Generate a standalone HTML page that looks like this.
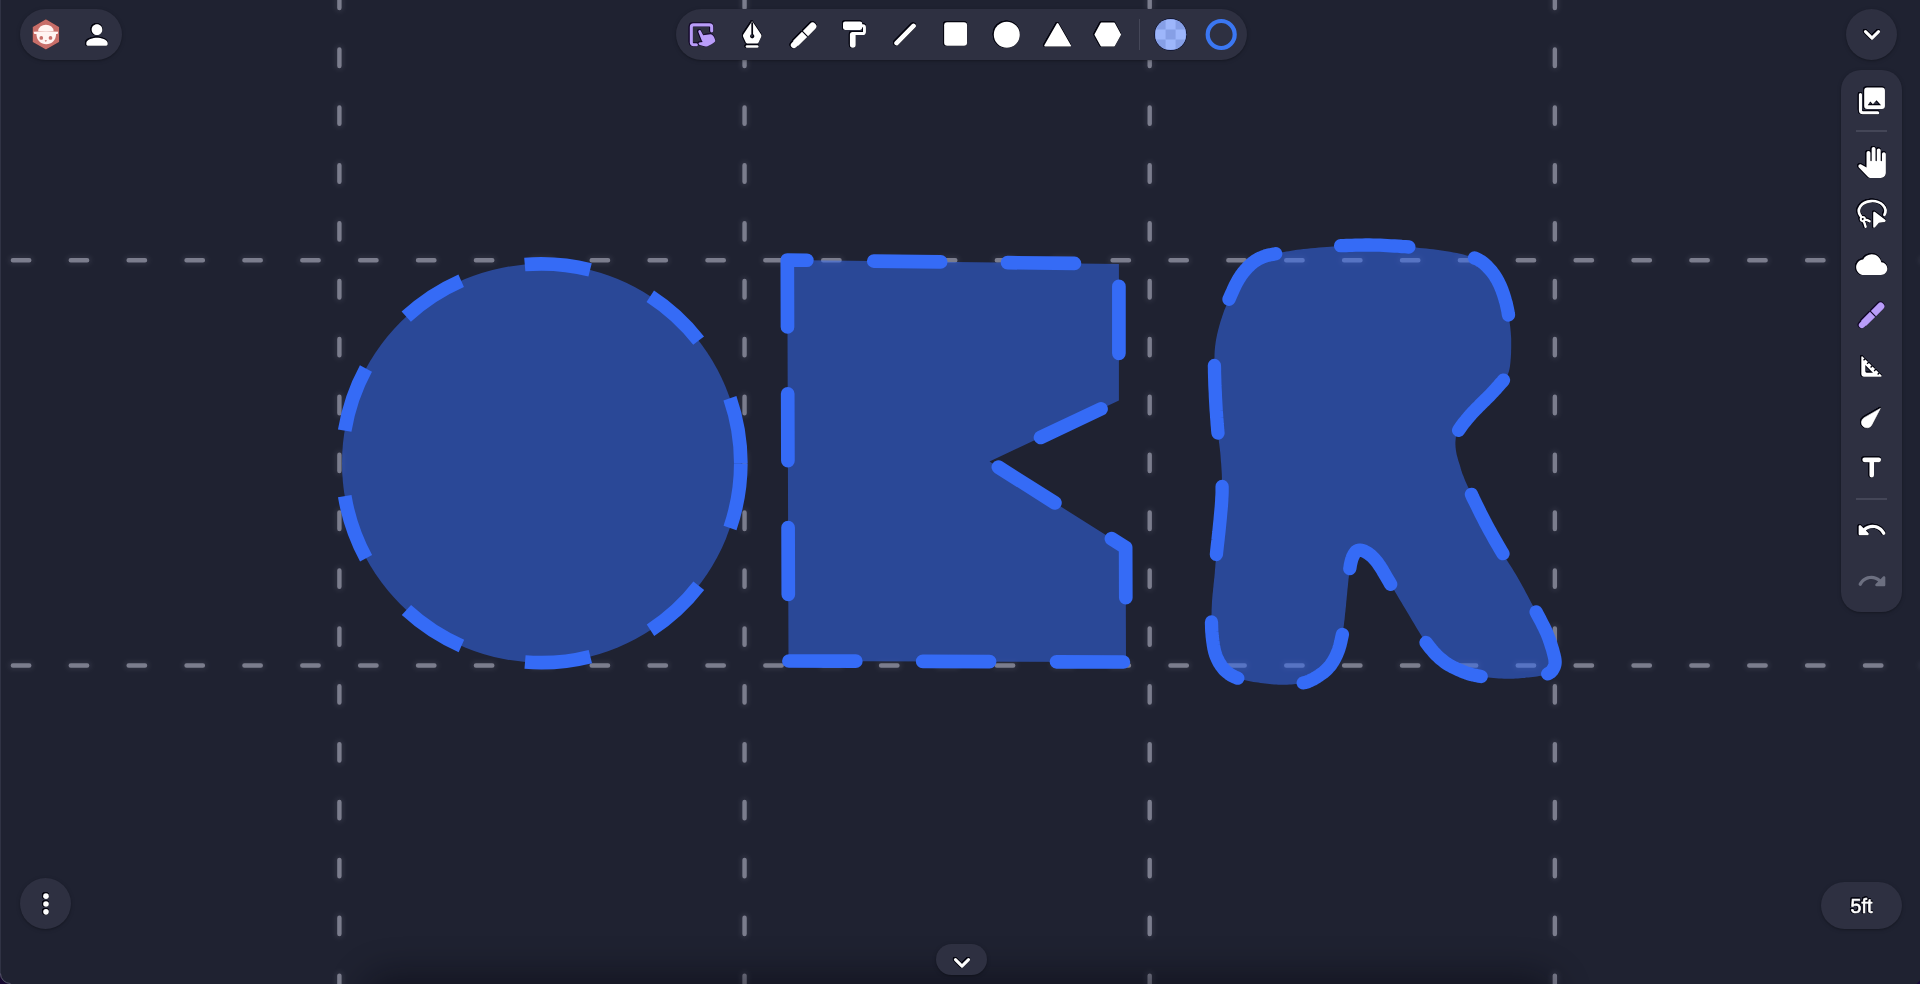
<!DOCTYPE html>
<html lang="en">
<head>
<meta charset="utf-8">
<title>Drawing canvas</title>
<style>
html,body{margin:0;padding:0}
body{width:1920px;height:984px;overflow:hidden;position:relative;background:#1f2231;font-family:"Liberation Sans",sans-serif}
.cv{position:absolute;left:0;top:0;display:block}
.pn{position:absolute;background:#2e3041;box-shadow:0 1px 2px rgba(0,0,0,.22),0 1px 5px rgba(0,0,0,.10)}
.ic{position:absolute;display:block;overflow:visible}
.hl2{filter:drop-shadow(.6px 0 .3px rgba(18,6,40,.75)) drop-shadow(-.6px 0 .3px rgba(18,6,40,.75)) drop-shadow(0 .6px .3px rgba(18,6,40,.75)) drop-shadow(0 -.6px .3px rgba(18,6,40,.75))}
.hl{filter:drop-shadow(.8px 0 .25px #04040f) drop-shadow(-.8px 0 .25px #04040f) drop-shadow(0 .8px .25px #04040f) drop-shadow(0 -.8px .25px #04040f)}
.ft{display:flex;align-items:center;justify-content:center;color:#fff;font-size:19.6px;letter-spacing:0}
.ft span{display:block;position:relative;top:.6px;-webkit-text-stroke:.6px #fff}
.edge{position:absolute;left:0;top:0;width:1px;height:984px;background:#303344}
.corner{position:absolute;left:0;top:0;display:block}
</style>
</head>
<body>
<svg class="cv" width="1920" height="984" viewBox="0 0 1920 984">
<defs><filter id="gb" x="-5%" y="-5%" width="110%" height="110%"><feGaussianBlur stdDeviation="2.2"/></filter></defs>
<g fill="none" stroke="#9a9cb0" stroke-opacity=".11" stroke-width="9" stroke-linecap="round" stroke-dasharray="16.40 41.479" filter="url(#gb)"><line x1="339.4" y1="-66.22" x2="339.4" y2="1000"/><line x1="744.55" y1="-66.22" x2="744.55" y2="1000"/><line x1="1149.7" y1="-66.22" x2="1149.7" y2="1000"/><line x1="1554.85" y1="-66.22" x2="1554.85" y2="1000"/><line x1="-102.88" y1="260.3" x2="1940" y2="260.3"/><line x1="-102.88" y1="665.5" x2="1940" y2="665.5"/></g>
<g fill="none" stroke="#7b7d8d" stroke-width="4.4" stroke-linecap="round" stroke-dasharray="16.40 41.479"><line x1="339.4" y1="-66.22" x2="339.4" y2="1000"/><line x1="744.55" y1="-66.22" x2="744.55" y2="1000"/><line x1="1149.7" y1="-66.22" x2="1149.7" y2="1000"/><line x1="1554.85" y1="-66.22" x2="1554.85" y2="1000"/><line x1="-102.88" y1="260.3" x2="1940" y2="260.3"/><line x1="-102.88" y1="665.5" x2="1940" y2="665.5"/></g>
<circle cx="541.4" cy="463.25" r="199.4" fill="#356bf6" fill-opacity="0.52"/><circle cx="541.4" cy="463.25" r="199.4" fill="none" stroke="#356bf6" stroke-width="13.7" stroke-dasharray="65.90 65.90"/>
<path d="M787.3 260.0 L788.5 661.0 L1126.0 662.0 L1125.65 547.6 L989.5 461.5 L1118.9 400.5 L1118.9 264.0Z" fill="#356bf6" fill-opacity="0.52"/><path d="M787.3 260.0 L788.5 661.0 L1126.0 662.0 L1125.65 547.6 L989.5 461.5 L1118.9 400.5 L1118.9 264.0Z" fill="none" stroke="#356bf6" stroke-width="13.7" stroke-linecap="round" stroke-linejoin="round" stroke-dasharray="66.9 66.9"/>
<path d="M1218.0 433.1 L1217.7 430.3 L1217.5 427.3 L1217.2 424.2 L1217.0 420.9 L1216.7 417.5 L1216.5 414.0 L1216.2 410.5 L1216.0 407.0 L1215.8 403.5 L1215.6 400.0 L1215.4 396.4 L1215.3 392.9 L1215.1 389.3 L1214.9 385.6 L1214.8 382.0 L1214.7 378.5 L1214.6 375.0 L1214.5 371.7 L1214.5 368.5 L1214.4 365.5 L1214.4 362.7 L1214.4 360.1 L1214.5 357.6 L1214.5 355.3 L1214.6 353.0 L1214.7 350.8 L1214.9 348.6 L1215.1 346.4 L1215.4 344.2 L1215.7 341.9 L1216.1 339.5 L1216.6 337.1 L1217.1 334.6 L1217.7 332.1 L1218.3 329.6 L1219.0 327.1 L1219.6 324.7 L1220.3 322.3 L1221.0 320.1 L1221.7 317.9 L1222.4 315.8 L1223.1 313.8 L1223.7 311.9 L1224.4 310.1 L1225.1 308.4 L1225.9 306.6 L1226.6 304.8 L1227.4 303.0 L1228.2 301.2 L1229.0 299.3 L1229.9 297.3 L1230.8 295.2 L1231.7 293.1 L1232.7 291.0 L1233.6 288.9 L1234.6 286.7 L1235.6 284.6 L1236.7 282.6 L1237.8 280.7 L1238.8 278.8 L1240.0 277.1 L1241.1 275.3 L1242.3 273.7 L1243.5 272.1 L1244.8 270.6 L1246.0 269.2 L1247.3 267.8 L1248.5 266.5 L1249.8 265.3 L1251.0 264.1 L1252.2 263.1 L1253.4 262.1 L1254.7 261.2 L1255.9 260.4 L1257.1 259.7 L1258.3 259.0 L1259.5 258.4 L1260.8 257.8 L1262.0 257.3 L1263.1 256.8 L1264.3 256.3 L1265.4 256.0 L1266.5 255.6 L1267.5 255.3 L1268.6 255.1 L1269.8 254.9 L1271.0 254.6 L1272.4 254.4 L1274.0 254.1 L1275.7 253.7 L1277.5 253.4 L1279.5 253.0 L1281.6 252.5 L1283.9 252.1 L1286.3 251.6 L1288.8 251.2 L1291.4 250.7 L1294.2 250.3 L1297.1 249.8 L1300.2 249.4 L1303.6 249.0 L1307.2 248.7 L1311.1 248.3 L1315.1 247.9 L1319.1 247.6 L1323.1 247.3 L1326.8 247.0 L1330.1 246.7 L1333.0 246.5 L1335.3 246.3 L1337.0 246.1 L1338.1 246.0 L1338.7 245.9 L1339.0 245.8 L1339.0 245.8 L1339.1 245.8 L1339.2 245.8 L1339.7 245.8 L1340.6 245.7 L1342.0 245.7 L1343.9 245.6 L1346.3 245.5 L1349.0 245.4 L1352.1 245.3 L1355.3 245.2 L1358.8 245.1 L1362.3 245.1 L1365.8 245.0 L1369.3 245.0 L1372.9 245.1 L1376.4 245.1 L1380.0 245.2 L1383.5 245.4 L1387.2 245.6 L1390.8 245.8 L1394.5 246.0 L1398.1 246.2 L1401.8 246.5 L1405.4 246.7 L1408.9 247.0 L1412.5 247.3 L1416.0 247.6 L1419.4 247.9 L1422.9 248.2 L1426.3 248.5 L1429.8 248.9 L1433.1 249.3 L1436.5 249.7 L1439.9 250.2 L1443.2 250.7 L1446.6 251.2 L1450.0 251.8 L1453.4 252.5 L1456.8 253.1 L1460.1 253.8 L1463.4 254.6 L1466.4 255.4 L1469.4 256.2 L1472.0 257.1 L1474.5 258.0 L1476.7 258.9 L1478.7 259.9 L1480.4 260.9 L1482.0 261.9 L1483.4 263.0 L1484.7 264.1 L1486.0 265.3 L1487.2 266.5 L1488.3 267.7 L1489.5 269.0 L1490.6 270.3 L1491.8 271.6 L1492.8 273.0 L1493.9 274.4 L1494.9 275.9 L1495.8 277.3 L1496.7 278.9 L1497.6 280.4 L1498.4 282.0 L1499.2 283.6 L1500.0 285.2 L1500.7 286.9 L1501.4 288.6 L1502.1 290.3 L1502.7 292.1 L1503.3 293.8 L1503.9 295.6 L1504.4 297.2 L1504.9 298.9 L1505.3 300.5 L1505.8 302.0 L1506.2 303.4 L1506.5 304.8 L1506.8 306.2 L1507.1 307.5 L1507.4 308.9 L1507.7 310.3 L1508.0 311.8 L1508.2 313.3 L1508.5 315.0 L1508.8 316.7 L1509.1 318.6 L1509.4 320.5 L1509.6 322.5 L1509.9 324.5 L1510.2 326.6 L1510.4 328.6 L1510.6 330.7 L1510.8 332.7 L1510.9 334.8 L1511.1 336.8 L1511.2 338.8 L1511.2 340.8 L1511.2 342.7 L1511.2 344.7 L1511.2 346.7 L1511.2 348.6 L1511.1 350.5 L1511.1 352.4 L1511.0 354.3 L1510.9 356.1 L1510.8 358.0 L1510.6 359.8 L1510.5 361.6 L1510.3 363.4 L1510.1 365.1 L1509.9 366.8 L1509.6 368.3 L1509.3 369.8 L1509.0 371.1 L1508.6 372.2 L1508.3 373.2 L1507.9 374.1 L1507.5 374.9 L1507.0 375.7 L1506.5 376.4 L1505.9 377.2 L1505.2 378.0 L1504.4 379.0 L1503.5 380.1 L1502.5 381.4 L1501.3 382.7 L1500.0 384.2 L1498.7 385.7 L1497.2 387.3 L1495.8 389.0 L1494.2 390.6 L1492.7 392.3 L1491.1 394.0 L1489.5 395.7 L1487.8 397.4 L1486.1 399.0 L1484.4 400.7 L1482.7 402.4 L1480.9 404.1 L1479.2 405.9 L1477.5 407.6 L1475.7 409.3 L1474.1 411.1 L1472.4 412.8 L1470.8 414.6 L1469.2 416.5 L1467.6 418.3 L1466.1 420.2 L1464.6 422.0 L1463.1 423.8 L1461.8 425.6 L1460.6 427.3 L1459.5 428.9 L1458.6 430.4 L1457.8 431.8 L1457.1 433.1 L1456.7 434.4 L1456.3 435.5 L1456.0 436.6 L1455.8 437.7 L1455.7 438.7 L1455.6 439.8 L1455.5 440.9 L1455.4 442.1 L1455.4 443.2 L1455.4 444.5 L1455.5 445.7 L1455.5 446.9 L1455.7 448.2 L1455.8 449.4 L1456.0 450.7 L1456.2 451.9 L1456.4 453.1 L1456.6 454.3 L1456.9 455.4 L1457.2 456.5 L1457.5 457.6 L1457.8 458.7 L1458.1 459.8 L1458.4 460.9 L1458.8 461.9 L1459.1 462.9 L1459.4 463.9 L1459.8 464.9 L1460.0 465.9 L1460.3 466.7 L1460.5 467.6 L1460.7 468.4 L1461.0 469.3 L1461.2 470.2 L1461.5 471.1 L1461.9 472.2 L1462.3 473.4 L1462.8 474.7 L1463.4 476.1 L1464.0 477.7 L1464.7 479.4 L1465.4 481.2 L1466.2 483.0 L1467.1 485.0 L1468.0 487.1 L1469.1 489.4 L1470.2 491.7 L1471.4 494.3 L1472.6 497.0 L1474.0 499.9 L1475.5 502.9 L1477.1 506.1 L1478.7 509.4 L1480.3 512.7 L1482.0 516.0 L1483.7 519.3 L1485.3 522.5 L1487.0 525.6 L1488.6 528.6 L1490.2 531.5 L1491.8 534.4 L1493.4 537.3 L1495.0 540.1 L1496.6 542.9 L1498.2 545.6 L1499.8 548.4 L1501.4 551.1 L1503.0 553.7 L1504.6 556.3 L1506.1 558.9 L1507.7 561.4 L1509.3 563.9 L1510.8 566.3 L1512.4 568.8 L1514.0 571.4 L1515.6 574.0 L1517.2 576.8 L1518.9 579.7 L1520.6 582.7 L1522.4 585.9 L1524.2 589.3 L1526.0 592.7 L1527.8 596.1 L1529.6 599.5 L1531.4 602.9 L1533.1 606.1 L1534.7 609.1 L1536.1 611.9 L1537.5 614.6 L1538.8 617.0 L1540.0 619.2 L1541.1 621.4 L1542.1 623.4 L1543.1 625.3 L1544.1 627.3 L1545.0 629.2 L1545.9 631.1 L1546.8 633.1 L1547.6 635.1 L1548.4 637.1 L1549.2 639.2 L1549.9 641.2 L1550.6 643.3 L1551.2 645.3 L1551.8 647.2 L1552.4 649.0 L1552.9 650.8 L1553.3 652.4 L1553.7 654.0 L1554.1 655.4 L1554.4 656.8 L1554.7 658.1 L1554.9 659.3 L1555.0 660.4 L1555.1 661.6 L1555.1 662.6 L1555.0 663.7 L1554.8 664.8 L1554.5 665.9 L1554.2 666.9 L1553.7 667.9 L1553.2 668.9 L1552.6 669.9 L1551.9 670.8 L1551.1 671.7 L1550.1 672.5 L1549.0 673.2 L1547.7 673.9 L1546.3 674.5 L1544.7 675.0 L1542.9 675.4 L1541.1 675.8 L1539.1 676.1 L1537.0 676.4 L1534.9 676.7 L1532.8 676.9 L1530.6 677.2 L1528.5 677.4 L1526.4 677.6 L1524.3 677.9 L1522.2 678.1 L1520.1 678.3 L1517.9 678.5 L1515.7 678.6 L1513.5 678.7 L1511.2 678.8 L1508.9 678.8 L1506.5 678.8 L1504.0 678.8 L1501.5 678.6 L1498.9 678.5 L1496.3 678.3 L1493.6 678.1 L1491.0 677.8 L1488.4 677.5 L1485.9 677.2 L1483.5 676.8 L1481.2 676.5 L1479.1 676.1 L1477.1 675.7 L1475.1 675.4 L1473.3 674.9 L1471.5 674.5 L1469.8 674.0 L1468.0 673.5 L1466.3 672.9 L1464.5 672.2 L1462.6 671.5 L1460.7 670.7 L1458.8 669.9 L1456.8 669.0 L1454.9 668.1 L1452.9 667.1 L1450.9 666.0 L1449.0 664.9 L1447.0 663.7 L1445.1 662.4 L1443.3 661.0 L1441.5 659.6 L1439.7 658.1 L1438.0 656.5 L1436.3 654.9 L1434.6 653.1 L1433.0 651.3 L1431.3 649.3 L1429.6 647.2 L1427.8 644.9 L1426.0 642.5 L1424.1 639.8 L1422.2 636.9 L1420.3 633.9 L1418.3 630.7 L1416.3 627.4 L1414.3 624.1 L1412.3 620.8 L1410.4 617.5 L1408.5 614.3 L1406.7 611.3 L1404.9 608.3 L1403.2 605.4 L1401.5 602.6 L1399.9 599.9 L1398.3 597.2 L1396.7 594.5 L1395.2 591.9 L1393.7 589.3 L1392.2 586.8 L1390.7 584.3 L1389.3 581.9 L1387.8 579.4 L1386.4 577.0 L1385.1 574.7 L1383.7 572.4 L1382.4 570.1 L1381.1 568.0 L1379.8 566.1 L1378.6 564.2 L1377.4 562.6 L1376.2 561.0 L1375.1 559.7 L1374.0 558.5 L1372.9 557.4 L1371.9 556.4 L1370.9 555.5 L1369.9 554.7 L1368.9 554.0 L1368.0 553.3 L1367.0 552.7 L1366.1 552.1 L1365.1 551.6 L1364.2 551.2 L1363.3 550.8 L1362.4 550.5 L1361.5 550.3 L1360.7 550.1 L1359.9 550.1 L1359.1 550.1 L1358.4 550.3 L1357.7 550.5 L1357.0 550.8 L1356.4 551.2 L1355.8 551.7 L1355.3 552.3 L1354.8 553.0 L1354.3 553.7 L1353.8 554.5 L1353.4 555.4 L1352.9 556.3 L1352.5 557.2 L1352.2 558.1 L1351.8 559.1 L1351.5 560.2 L1351.2 561.4 L1350.9 562.6 L1350.6 563.9 L1350.3 565.4 L1350.1 566.9 L1349.8 568.6 L1349.5 570.5 L1349.3 572.5 L1349.0 574.7 L1348.8 577.0 L1348.5 579.3 L1348.3 581.8 L1348.0 584.2 L1347.8 586.7 L1347.5 589.1 L1347.3 591.6 L1347.1 594.1 L1346.8 596.6 L1346.6 599.1 L1346.3 601.6 L1346.1 604.1 L1345.9 606.6 L1345.6 609.0 L1345.4 611.4 L1345.1 613.6 L1344.9 615.8 L1344.7 617.9 L1344.5 619.9 L1344.2 621.8 L1344.0 623.7 L1343.8 625.5 L1343.5 627.3 L1343.3 629.0 L1343.0 630.8 L1342.7 632.5 L1342.4 634.4 L1342.0 636.2 L1341.6 638.0 L1341.2 639.9 L1340.8 641.8 L1340.3 643.7 L1339.9 645.5 L1339.3 647.3 L1338.8 649.1 L1338.2 650.8 L1337.5 652.5 L1336.8 654.2 L1336.1 655.8 L1335.4 657.3 L1334.5 658.9 L1333.7 660.4 L1332.8 661.8 L1331.9 663.2 L1331.0 664.6 L1330.0 665.9 L1328.9 667.1 L1327.9 668.3 L1326.7 669.5 L1325.6 670.5 L1324.4 671.6 L1323.2 672.6 L1321.9 673.5 L1320.6 674.4 L1319.4 675.3 L1318.1 676.1 L1316.8 677.0 L1315.6 677.7 L1314.3 678.5 L1313.1 679.2 L1311.8 679.8 L1310.6 680.4 L1309.3 681.0 L1307.9 681.6 L1306.4 682.1 L1304.9 682.5 L1303.2 682.9 L1301.5 683.3 L1299.6 683.6 L1297.6 683.9 L1295.6 684.1 L1293.5 684.3 L1291.4 684.5 L1289.2 684.6 L1287.1 684.7 L1284.9 684.7 L1282.7 684.7 L1280.5 684.7 L1278.4 684.7 L1276.2 684.6 L1274.0 684.4 L1271.8 684.3 L1269.6 684.1 L1267.4 683.8 L1265.2 683.6 L1262.9 683.3 L1260.6 683.0 L1258.3 682.6 L1255.9 682.3 L1253.5 681.9 L1251.1 681.4 L1248.7 681.0 L1246.3 680.5 L1244.0 680.0 L1241.8 679.4 L1239.8 678.8 L1237.8 678.2 L1236.0 677.5 L1234.4 676.8 L1232.8 676.0 L1231.4 675.3 L1230.0 674.4 L1228.8 673.6 L1227.5 672.6 L1226.4 671.7 L1225.2 670.6 L1224.1 669.5 L1223.1 668.3 L1222.1 667.0 L1221.1 665.6 L1220.2 664.2 L1219.3 662.8 L1218.5 661.3 L1217.7 659.7 L1217.0 658.2 L1216.3 656.6 L1215.7 655.0 L1215.2 653.3 L1214.7 651.7 L1214.3 650.0 L1213.9 648.3 L1213.6 646.5 L1213.3 644.8 L1213.1 643.0 L1212.8 641.3 L1212.6 639.6 L1212.4 638.0 L1212.2 636.4 L1212.1 634.8 L1212.0 633.3 L1211.8 631.7 L1211.7 630.2 L1211.7 628.7 L1211.6 627.1 L1211.6 625.5 L1211.5 623.8 L1211.5 622.0 L1211.5 620.1 L1211.5 618.2 L1211.5 616.3 L1211.5 614.2 L1211.6 612.2 L1211.6 610.1 L1211.7 607.9 L1211.8 605.7 L1211.9 603.5 L1212.0 601.2 L1212.2 598.9 L1212.4 596.5 L1212.6 594.1 L1212.9 591.7 L1213.1 589.2 L1213.4 586.7 L1213.6 584.3 L1213.9 581.8 L1214.1 579.5 L1214.4 577.2 L1214.6 575.0 L1214.8 572.9 L1214.9 570.8 L1215.1 568.8 L1215.3 566.8 L1215.4 564.7 L1215.6 562.5 L1215.8 560.1 L1216.1 557.4 L1216.4 554.5 L1216.7 551.3 L1217.1 547.7 L1217.5 544.0 L1218.0 540.0 L1218.4 535.9 L1218.9 531.8 L1219.3 527.7 L1219.7 523.7 L1220.1 519.9 L1220.4 516.4 L1220.7 513.0 L1221.0 509.8 L1221.3 506.7 L1221.5 503.8 L1221.7 500.9 L1221.8 498.1 L1222.0 495.3 L1222.1 492.5 L1222.1 489.5 L1222.1 486.5 L1222.1 483.4 L1222.0 480.2 L1221.9 477.0 L1221.8 473.7 L1221.6 470.4 L1221.4 467.2 L1221.2 464.0 L1220.9 461.0 L1220.7 458.1 L1220.5 455.3 L1220.3 452.8 L1220.0 450.5 L1219.8 448.4 L1219.5 446.3 L1219.3 444.3 L1219.0 442.4 L1218.8 440.3 L1218.5 438.1 L1218.3 435.7Z" fill="#356bf6" fill-opacity="0.52"/>
<path d="M1218.0 433.1 L1217.7 430.3 L1217.5 427.3 L1217.2 424.2 L1217.0 420.9 L1216.7 417.5 L1216.5 414.0 L1216.2 410.5 L1216.0 407.0 L1215.8 403.5 L1215.6 400.0 L1215.4 396.4 L1215.3 392.9 L1215.1 389.3 L1214.9 385.6 L1214.8 382.0 L1214.7 378.5 L1214.6 375.0 L1214.5 371.7 L1214.5 368.5 L1214.4 365.5 M1229.0 299.3 L1229.9 297.3 L1230.8 295.2 L1231.7 293.1 L1232.7 291.0 L1233.6 288.9 L1234.6 286.7 L1235.6 284.6 L1236.7 282.6 L1237.8 280.7 L1238.8 278.8 L1240.0 277.1 L1241.1 275.3 L1242.3 273.7 L1243.5 272.1 L1244.8 270.6 L1246.0 269.2 L1247.3 267.8 L1248.5 266.5 L1249.8 265.3 L1251.0 264.1 L1252.2 263.1 L1253.4 262.1 L1254.7 261.2 L1255.9 260.4 L1257.1 259.7 L1258.3 259.0 L1259.5 258.4 L1260.8 257.8 L1262.0 257.3 L1263.1 256.8 L1264.3 256.3 L1265.4 256.0 L1266.5 255.6 L1267.5 255.3 L1268.6 255.1 L1269.8 254.9 L1271.0 254.6 L1272.4 254.4 L1274.0 254.1 L1275.7 253.7 M1340.6 245.7 L1342.0 245.7 L1343.9 245.6 L1346.3 245.5 L1349.0 245.4 L1352.1 245.3 L1355.3 245.2 L1358.8 245.1 L1362.3 245.1 L1365.8 245.0 L1369.3 245.0 L1372.9 245.1 L1376.4 245.1 L1380.0 245.2 L1383.5 245.4 L1387.2 245.6 L1390.8 245.8 L1394.5 246.0 L1398.1 246.2 L1401.8 246.5 L1405.4 246.7 L1408.9 247.0 M1474.5 258.0 L1476.7 258.9 L1478.7 259.9 L1480.4 260.9 L1482.0 261.9 L1483.4 263.0 L1484.7 264.1 L1486.0 265.3 L1487.2 266.5 L1488.3 267.7 L1489.5 269.0 L1490.6 270.3 L1491.8 271.6 L1492.8 273.0 L1493.9 274.4 L1494.9 275.9 L1495.8 277.3 L1496.7 278.9 L1497.6 280.4 L1498.4 282.0 L1499.2 283.6 L1500.0 285.2 L1500.7 286.9 L1501.4 288.6 L1502.1 290.3 L1502.7 292.1 L1503.3 293.8 L1503.9 295.6 L1504.4 297.2 L1504.9 298.9 L1505.3 300.5 L1505.8 302.0 L1506.2 303.4 L1506.5 304.8 L1506.8 306.2 L1507.1 307.5 L1507.4 308.9 L1507.7 310.3 L1508.0 311.8 L1508.2 313.3 L1508.5 315.0 M1503.5 380.1 L1502.5 381.4 L1501.3 382.7 L1500.0 384.2 L1498.7 385.7 L1497.2 387.3 L1495.8 389.0 L1494.2 390.6 L1492.7 392.3 L1491.1 394.0 L1489.5 395.7 L1487.8 397.4 L1486.1 399.0 L1484.4 400.7 L1482.7 402.4 L1480.9 404.1 L1479.2 405.9 L1477.5 407.6 L1475.7 409.3 L1474.1 411.1 L1472.4 412.8 L1470.8 414.6 L1469.2 416.5 L1467.6 418.3 L1466.1 420.2 L1464.6 422.0 L1463.1 423.8 L1461.8 425.6 L1460.6 427.3 L1459.5 428.9 L1458.6 430.4 M1471.4 494.3 L1472.6 497.0 L1474.0 499.9 L1475.5 502.9 L1477.1 506.1 L1478.7 509.4 L1480.3 512.7 L1482.0 516.0 L1483.7 519.3 L1485.3 522.5 L1487.0 525.6 L1488.6 528.6 L1490.2 531.5 L1491.8 534.4 L1493.4 537.3 L1495.0 540.1 L1496.6 542.9 L1498.2 545.6 L1499.8 548.4 L1501.4 551.1 L1503.0 553.7 M1536.1 611.9 L1537.5 614.6 L1538.8 617.0 L1540.0 619.2 L1541.1 621.4 L1542.1 623.4 L1543.1 625.3 L1544.1 627.3 L1545.0 629.2 L1545.9 631.1 L1546.8 633.1 L1547.6 635.1 L1548.4 637.1 L1549.2 639.2 L1549.9 641.2 L1550.6 643.3 L1551.2 645.3 L1551.8 647.2 L1552.4 649.0 L1552.9 650.8 L1553.3 652.4 L1553.7 654.0 L1554.1 655.4 L1554.4 656.8 L1554.7 658.1 L1554.9 659.3 L1555.0 660.4 L1555.1 661.6 L1555.1 662.6 L1555.0 663.7 L1554.8 664.8 L1554.5 665.9 L1554.2 666.9 L1553.7 667.9 L1553.2 668.9 L1552.6 669.9 L1551.9 670.8 L1551.1 671.7 L1550.1 672.5 L1549.0 673.2 L1547.7 673.9 M1481.2 676.5 L1479.1 676.1 L1477.1 675.7 L1475.1 675.4 L1473.3 674.9 L1471.5 674.5 L1469.8 674.0 L1468.0 673.5 L1466.3 672.9 L1464.5 672.2 L1462.6 671.5 L1460.7 670.7 L1458.8 669.9 L1456.8 669.0 L1454.9 668.1 L1452.9 667.1 L1450.9 666.0 L1449.0 664.9 L1447.0 663.7 L1445.1 662.4 L1443.3 661.0 L1441.5 659.6 L1439.7 658.1 L1438.0 656.5 L1436.3 654.9 L1434.6 653.1 L1433.0 651.3 L1431.3 649.3 L1429.6 647.2 L1427.8 644.9 L1426.0 642.5 M1390.7 584.3 L1389.3 581.9 L1387.8 579.4 L1386.4 577.0 L1385.1 574.7 L1383.7 572.4 L1382.4 570.1 L1381.1 568.0 L1379.8 566.1 L1378.6 564.2 L1377.4 562.6 L1376.2 561.0 L1375.1 559.7 L1374.0 558.5 L1372.9 557.4 L1371.9 556.4 L1370.9 555.5 L1369.9 554.7 L1368.9 554.0 L1368.0 553.3 L1367.0 552.7 L1366.1 552.1 L1365.1 551.6 L1364.2 551.2 L1363.3 550.8 L1362.4 550.5 L1361.5 550.3 L1360.7 550.1 L1359.9 550.1 L1359.1 550.1 L1358.4 550.3 L1357.7 550.5 L1357.0 550.8 L1356.4 551.2 L1355.8 551.7 L1355.3 552.3 L1354.8 553.0 L1354.3 553.7 L1353.8 554.5 L1353.4 555.4 L1352.9 556.3 L1352.5 557.2 L1352.2 558.1 L1351.8 559.1 L1351.5 560.2 L1351.2 561.4 L1350.9 562.6 L1350.6 563.9 L1350.3 565.4 L1350.1 566.9 L1349.8 568.6 M1342.4 634.4 L1342.0 636.2 L1341.6 638.0 L1341.2 639.9 L1340.8 641.8 L1340.3 643.7 L1339.9 645.5 L1339.3 647.3 L1338.8 649.1 L1338.2 650.8 L1337.5 652.5 L1336.8 654.2 L1336.1 655.8 L1335.4 657.3 L1334.5 658.9 L1333.7 660.4 L1332.8 661.8 L1331.9 663.2 L1331.0 664.6 L1330.0 665.9 L1328.9 667.1 L1327.9 668.3 L1326.7 669.5 L1325.6 670.5 L1324.4 671.6 L1323.2 672.6 L1321.9 673.5 L1320.6 674.4 L1319.4 675.3 L1318.1 676.1 L1316.8 677.0 L1315.6 677.7 L1314.3 678.5 L1313.1 679.2 L1311.8 679.8 L1310.6 680.4 L1309.3 681.0 L1307.9 681.6 L1306.4 682.1 L1304.9 682.5 L1303.2 682.9 M1237.8 678.2 L1236.0 677.5 L1234.4 676.8 L1232.8 676.0 L1231.4 675.3 L1230.0 674.4 L1228.8 673.6 L1227.5 672.6 L1226.4 671.7 L1225.2 670.6 L1224.1 669.5 L1223.1 668.3 L1222.1 667.0 L1221.1 665.6 L1220.2 664.2 L1219.3 662.8 L1218.5 661.3 L1217.7 659.7 L1217.0 658.2 L1216.3 656.6 L1215.7 655.0 L1215.2 653.3 L1214.7 651.7 L1214.3 650.0 L1213.9 648.3 L1213.6 646.5 L1213.3 644.8 L1213.1 643.0 L1212.8 641.3 L1212.6 639.6 L1212.4 638.0 L1212.2 636.4 L1212.1 634.8 L1212.0 633.3 L1211.8 631.7 L1211.7 630.2 L1211.7 628.7 L1211.6 627.1 L1211.6 625.5 L1211.5 623.8 L1211.5 622.0 M1216.4 554.5 L1216.7 551.3 L1217.1 547.7 L1217.5 544.0 L1218.0 540.0 L1218.4 535.9 L1218.9 531.8 L1219.3 527.7 L1219.7 523.7 L1220.1 519.9 L1220.4 516.4 L1220.7 513.0 L1221.0 509.8 L1221.3 506.7 L1221.5 503.8 L1221.7 500.9 L1221.8 498.1 L1222.0 495.3 L1222.1 492.5 L1222.1 489.5 L1222.1 486.5" fill="none" stroke="#356bf6" stroke-width="13.3" stroke-linecap="round" stroke-linejoin="round"/>
</svg>
<div style="position:absolute;left:385px;top:996px;width:1150px;height:20px;border-radius:20px;box-shadow:0 0 34px 22px rgba(6,7,16,.45)"></div>
<div class="pn" style="left:20px;top:9px;width:102px;height:51px;border-radius:26px"></div>
<svg class="ic" style="left:30px;top:18px;filter:drop-shadow(0 0 .5px rgba(0,0,0,.8))" width="32" height="32" viewBox="30 18 32 32"><path d="M45.900 19.300L59.100 26.900V41.900L45.900 49.400L32.700 41.900V26.900Z" fill="#c86e69"/><path d="M38.200 31.200A7.700 6.500 0 0 1 53.600 31.200Z" fill="#fff4f2"/><path d="M33.600 31.700Q46 30.900 58.200 31.700L57.600 34.100H34.300Z" fill="#fff4f2"/><path d="M36.400 33.800H56.100C56.100 40.500 51.500 44.200 46.200 44.200C41 44.200 36.400 40.500 36.400 33.800Z" fill="#fff4f2"/><circle cx="41.300" cy="37.900" r="1.850" fill="#c86e69"/><circle cx="50.500" cy="37.900" r="1.850" fill="#c86e69"/><path d="M44.600 40.200H47L45.800 42Z" fill="#c86e69"/></svg>
<svg class="ic hl" style="left:81.20px;top:18.90px;color:#fff;" width="32" height="32" viewBox="0 0 24 24" fill="currentColor"><path d="M12 12c2.21 0 4-1.79 4-4s-1.79-4-4-4-4 1.790-4 4 1.790 4 4 4zm0 2c-2.670 0-8 1.340-8 4v1c0 .55.45 1 1 1h14c.55 0 1-.45 1-1v-1c0-2.660-5.330-4-8-4z"/></svg>
<div class="pn" style="left:676px;top:9px;width:571px;height:51px;border-radius:26px"></div>
<svg class="ic hl2" style="left:686.00px;top:18.50px;color:#b99df9;" width="32" height="32" viewBox="0 0 24 24" fill="currentColor"><path d="M7.800 19.300H5.600a1.600 1.600 0 0 1-1.600-1.600V6a1.600 1.600 0 0 1 1.600-1.600H17.660a1.600 1.600 0 0 1 1.600 1.600V8.900" fill="none" stroke="currentColor" stroke-width="2.300" stroke-linecap="round"/><path d="M11.190 8.940L12.900 12.200L14.200 12L18.300 11.500C19.500 11.600 20.600 12.900 21.100 13.700L21.800 15.500C22.100 16.300 21.800 17 21.300 17.400L19.500 18.700L16.200 20.400C15.600 20.700 15 20.800 14.400 20.600L10.300 19.500C9.500 19.200 9.200 18.500 9.600 17.900C9.900 17.400 10.600 17.300 11.200 17.400L12.500 17.300L11.900 16.400L9.330 9.920A1.050 1.050 0 0 1 11.190 8.940Z"/></svg>
<svg class="ic hl" style="left:736.80px;top:18.50px;color:#fff;" width="32" height="32" viewBox="0 0 24 24" fill="currentColor"><path fill-rule="evenodd" d="M11.400 2.400C11 2.400 10.800 2.600 10.600 2.900L4.700 11.700C4.400 12.200 4.400 12.800 4.600 13.300L6.600 17.700C6.800 18.100 7.100 18.300 7.500 18.300H15.300C15.700 18.300 16 18.100 16.200 17.700L18.200 13.300C18.400 12.800 18.400 12.200 18.100 11.700L12.200 2.900C12 2.600 11.800 2.400 11.400 2.400ZM10.750 2H12.050V11.480A1.600 1.600 0 1 1 10.750 11.480Z"/><rect x="6.500" y="19.650" width="9.700" height="1.950" rx=".95"/></svg>
<svg class="ic hl" style="left:787.60px;top:18.50px;color:#fff;" width="32" height="32" viewBox="0 0 24 24" fill="currentColor"><g transform="rotate(-45 12 12)"><path d="M13.550 9.250H21.400a2.500 2.500 0 0 1 2.500 2.500v.5a2.500 2.500 0 0 1-2.500 2.500H13.550Z"/><path d="M12.650 9.250H3.500a.5.5 0 0 0-.5.450H1.300A2.300 2.300 0 0 0 1.300 14.300H3a.5.5 0 0 0 .5.450H12.650Z"/></g></svg>
<svg class="ic hl" style="left:838.40px;top:18.50px;color:#fff;" width="32" height="32" viewBox="0 0 24 24" fill="currentColor"><g transform="translate(.55 0)"><rect x="3.200" y="1.900" width="14.400" height="6.300" rx="1.600"/><path d="M17.400 5H18.100A1.200 1.200 0 0 1 19.300 6.200V9.700A1.200 1.200 0 0 1 18.100 10.900H11.700A1.100 1.100 0 0 0 10.600 12V13" fill="none" stroke="currentColor" stroke-width="2.200"/><rect x="8.400" y="9.800" width="4.300" height="11.800" rx="2.100"/></g></svg>
<svg class="ic hl" style="left:889.20px;top:18.50px;color:#fff;" width="32" height="32" viewBox="0 0 24 24" fill="currentColor"><path d="M5.700 18.100L18.400 5.200" fill="none" stroke="currentColor" stroke-width="3.500" stroke-linecap="round"/></svg>
<svg class="ic hl" style="left:940.00px;top:18.50px;color:#fff;" width="32" height="32" viewBox="0 0 24 24" fill="currentColor"><rect x="3.100" y="2.350" width="17.200" height="17.800" rx="2.300"/></svg>
<svg class="ic hl" style="left:990.80px;top:18.50px;color:#fff;" width="32" height="32" viewBox="0 0 24 24" fill="currentColor"><circle cx="11.850" cy="11.850" r="9.750"/></svg>
<svg class="ic hl" style="left:1041.60px;top:18.50px;color:#fff;" width="32" height="32" viewBox="0 0 24 24" fill="currentColor"><path d="M11.700 3.770L21.050 19.950H2.350Z" stroke="currentColor" stroke-width="1.400" stroke-linejoin="round"/></svg>
<svg class="ic hl" style="left:1092.40px;top:18.50px;color:#fff;" width="32" height="32" viewBox="0 0 24 24" fill="currentColor"><path d="M7 3.280H16.600L21.160 11.670L16.600 20.050H7L2.440 11.670Z" stroke="currentColor" stroke-width="1.200" stroke-linejoin="round"/></svg>
<div style="position:absolute;left:1138.6px;top:19px;width:1.3px;height:31px;background:#454758"></div>
<svg class="ic" style="left:1152px;top:16px;filter:none" width="37" height="37" viewBox="1152 16 37 37"><defs><clipPath id="cc"><circle cx="1170.600" cy="34.500" r="15.600"/></clipPath></defs><circle cx="1170.600" cy="34.500" r="16.300" fill="#0d1230"/><g clip-path="url(#cc)"><rect x="1150" y="14" width="40" height="40" fill="#9db6fb"/><g fill="#869fe6"><rect x="1155.600" y="19.500" width="10" height="10"/><rect x="1175.600" y="19.500" width="10" height="10"/><rect x="1165.600" y="29.500" width="10" height="10"/><rect x="1155.600" y="39.500" width="10" height="10"/><rect x="1175.600" y="39.500" width="10" height="10"/><rect x="1145.600" y="29.500" width="10" height="10"/><rect x="1185.600" y="29.500" width="10" height="10"/><rect x="1165.600" y="9.500" width="10" height="10"/><rect x="1165.600" y="49.500" width="10" height="10"/></g></g></svg>
<svg class="ic" style="left:1203px;top:16px;filter:none" width="37" height="37" viewBox="1203 16 37 37"><circle cx="1221.200" cy="34.500" r="13.500" fill="none" stroke="#3b77f2" stroke-width="4.200"/></svg>
<div class="pn" style="left:1846px;top:9px;width:51px;height:51px;border-radius:26px"></div>
<svg class="ic hl" style="left:1855.60px;top:18.50px;color:#fff;" width="32" height="32" viewBox="0 0 24 24" fill="currentColor"><path d="M7.1 9.5 L12 14.4 L16.9 9.5" fill="none" stroke="currentColor" stroke-width="2.3" stroke-linecap="round" stroke-linejoin="round"/></svg>
<div class="pn" style="left:1841px;top:70px;width:61px;height:542px;border-radius:20px"></div>
<svg class="ic hl" style="left:1856.00px;top:84.50px;color:#fff;" width="32" height="32" viewBox="0 0 24 24" fill="currentColor"><path fill-rule="evenodd" d="M8.350 1.950H19.500a2.200 2.200 0 0 1 2.200 2.200V15.750a2.200 2.200 0 0 1-2.200 2.200H8.350a2.200 2.200 0 0 1-2.200-2.200V4.150a2.200 2.200 0 0 1 2.200-2.200ZM8.800 15.200L10.700 12.400L12.700 14.400L15.400 11.400L18.800 15.200Z"/><path d="M3.330 7.200V19a1.750 1.750 0 0 0 1.750 1.750H16.300" fill="none" stroke="currentColor" stroke-width="2.300" stroke-linecap="round"/></svg>
<svg class="ic hl" style="left:1856.00px;top:146.50px;color:#fff;" width="32" height="32" viewBox="0 0 24 24" fill="currentColor"><path transform="translate(12 12) scale(.965) translate(-12.250 -12.350)" d="M21.500 4c-.83 0-1.500.67-1.500 1.500v5c0 .28-.22.5-.5.5s-.5-.22-.5-.5v-8c0-.83-.67-1.500-1.500-1.500S16 1.670 16 2.500v8c0 .28-.22.5-.5.5s-.5-.22-.5-.5v-9c0-.83-.67-1.500-1.500-1.500S12 .67 12 1.500v8.990c0 .28-.22.5-.5.5s-.5-.22-.5-.5V4.500c0-.83-.67-1.500-1.500-1.500S8 3.670 8 4.500v11.410l-4.120-2.350c-.58-.33-1.300-.24-1.780.22-.6.580-.62 1.540-.03 2.130l6.780 6.890c.75.770 1.770 1.200 2.850 1.200H19c2.210 0 4-1.790 4-4V5.500c0-.83-.67-1.500-1.500-1.500z"/></svg>
<svg class="ic hl" style="left:1856.00px;top:197.50px;color:#fff;" width="32" height="32" viewBox="0 0 24 24" fill="currentColor"><path d="M21.300 12.600A9.970 7.450 0 1 0 3.600 13.600" fill="none" stroke="currentColor" stroke-width="2" stroke-linecap="round"/><circle cx="5.100" cy="15.800" r="1.550" fill="none" stroke="currentColor" stroke-width="1.500"/><path d="M6.600 16.200C8 16.300 9.200 16.700 10.200 17.400M5.700 17.300C6.400 18.600 6.900 20 7.200 21.600" fill="none" stroke="currentColor" stroke-width="1.800" stroke-linecap="round"/><path d="M12.900 11.200C12.900 10.400 13.700 10 14.300 10.500L21.900 16.400C22.600 16.900 22.300 17.900 21.500 18L17.200 18.600L14.300 22C13.800 22.600 12.900 22.200 12.900 21.500Z"/></svg>
<svg class="ic hl" style="left:1856.00px;top:248.50px;color:#fff;" width="32" height="32" viewBox="0 0 24 24" fill="currentColor"><path transform="translate(12 12) scale(.975) translate(-12.200 -12.250)" d="M19.350 10.040C18.670 6.590 15.640 4 12 4 9.110 4 6.600 5.640 5.350 8.040 2.340 8.360 0 10.910 0 14c0 3.310 2.690 6 6 6h13c2.760 0 5-2.240 5-5 0-2.640-2.050-4.780-4.650-4.960z"/></svg>
<svg class="ic hl2" style="left:1856.00px;top:299.30px;color:#b99df9;" width="32" height="32" viewBox="0 0 24 24" fill="currentColor"><g transform="rotate(-45 12 12)"><path d="M13.550 9.250H21.400a2.500 2.500 0 0 1 2.500 2.500v.5a2.500 2.500 0 0 1-2.500 2.500H13.550Z"/><path d="M12.650 9.250H3.500a.5.5 0 0 0-.5.450H1.300A2.300 2.300 0 0 0 1.300 14.300H3a.5.5 0 0 0 .5.450H12.650Z"/></g></svg>
<svg class="ic hl" style="left:1856.00px;top:350.30px;color:#fff;" width="32" height="32" viewBox="0 0 24 24" fill="currentColor"><path fill-rule="evenodd" d="M17.660 17.660l-1.060 1.060-.71-.71 1.060-1.060-1.940-1.940-1.060 1.060-.71-.71 1.060-1.060-1.940-1.940-1.060 1.060-.71-.71 1.060-1.060L9.700 9.700l-1.060 1.060-.71-.71 1.060-1.060-1.940-1.940-1.060 1.060-.71-.71 1.060-1.060L4.850 4.850C4.540 4.540 4 4.760 4 5.210V18c0 1.100.9 2 2 2h12.790c.45 0 .67-.54.35-.85L17.660 17.660zM7 16v-4.760L12.760 17H8c-.55 0-1-.45-1-1z"/></svg>
<svg class="ic hl" style="left:1856.00px;top:402.00px;color:#fff;" width="32" height="32" viewBox="0 0 24 24" fill="currentColor"><path d="M18.300 4.800L6.170 11.740A4.100 4.100 0 1 0 11.840 17.200Z" stroke="currentColor" stroke-width=".5" stroke-linejoin="round"/></svg>
<svg class="ic hl" style="left:1856.00px;top:452.50px;color:#fff;" width="32" height="32" viewBox="0 0 24 24" fill="currentColor"><path d="M6.450 5.150H17.100M11.800 5.150V16.700" fill="none" stroke="currentColor" stroke-width="3.400" stroke-linecap="round"/></svg>
<svg class="ic hl" style="left:1856.00px;top:514.00px;color:#fff;" width="32" height="32" viewBox="0 0 24 24" fill="currentColor"><path d="M12.500 8c-2.650 0-5.050.99-6.900 2.600L3.710 8.710C3.080 8.080 2 8.520 2 9.410V15c0 .55.45 1 1 1h5.590c.89 0 1.340-1.080.71-1.710l-1.910-1.910c1.390-1.160 3.160-1.880 5.120-1.880 3.160 0 5.890 1.840 7.190 4.500.27.56.91.84 1.500.64.710-.23 1.070-1.040.75-1.720C20.230 10.420 16.650 8 12.500 8z"/></svg>
<svg class="ic" style="left:1856.00px;top:565.30px;color:#6c6f80;" width="32" height="32" viewBox="0 0 24 24" fill="currentColor"><path d="M18.400 10.600C16.550 8.990 14.150 8 11.500 8c-4.160 0-7.740 2.420-9.440 5.930-.32.670.04 1.470.75 1.710.59.2 1.230-.08 1.500-.64 1.300-2.660 4.030-4.500 7.190-4.500 1.950 0 3.730.72 5.120 1.880l-1.910 1.910c-.63.630-.19 1.710.7 1.710H21c.55 0 1-.45 1-1V9.410c0-.89-1.080-1.340-1.710-.71l-1.890 1.900z"/></svg>
<div style="position:absolute;left:1856px;top:130.2px;width:31px;height:1.7px;background:#444657"></div>
<div style="position:absolute;left:1856px;top:498.2px;width:31px;height:1.7px;background:#444657"></div>
<div class="pn" style="left:20px;top:878px;width:51px;height:51px;border-radius:26px"></div>
<svg class="ic hl" style="left:29.60px;top:888.00px;color:#fff;" width="32" height="32" viewBox="0 0 24 24" fill="currentColor"><circle cx="12" cy="6.1" r="2.1"/><circle cx="12" cy="12" r="2.1"/><circle cx="12" cy="17.9" r="2.1"/></svg>
<div class="pn" style="left:936px;top:944px;width:51px;height:31px;border-radius:16px"></div>
<svg class="ic hl" style="left:946.10px;top:946.80px;color:#fff;" width="32" height="32" viewBox="0 0 24 24" fill="currentColor"><path d="M7.1 9.5 L12 14.4 L16.9 9.5" fill="none" stroke="currentColor" stroke-width="2.3" stroke-linecap="round" stroke-linejoin="round"/></svg>
<div class="pn ft" style="left:1821px;top:882px;width:81px;height:47px;border-radius:24px"><span class="hl">5ft</span></div>
<div class="edge"></div>
<svg class="corner" width="1920" height="984" viewBox="0 0 1920 984">
<path d="M0 973.5 A10.5 10.5 0 0 0 10.5 984 H0Z" fill="#15062f"/>
<path d="M.5 973.5 A10 10 0 0 0 10.5 983.5" fill="none" stroke="#55536b" stroke-width="1"/>
<path d="M1920 980.5 L1916.5 984 H1920Z" fill="#1a0a3a"/>
</svg>
</body>
</html>
